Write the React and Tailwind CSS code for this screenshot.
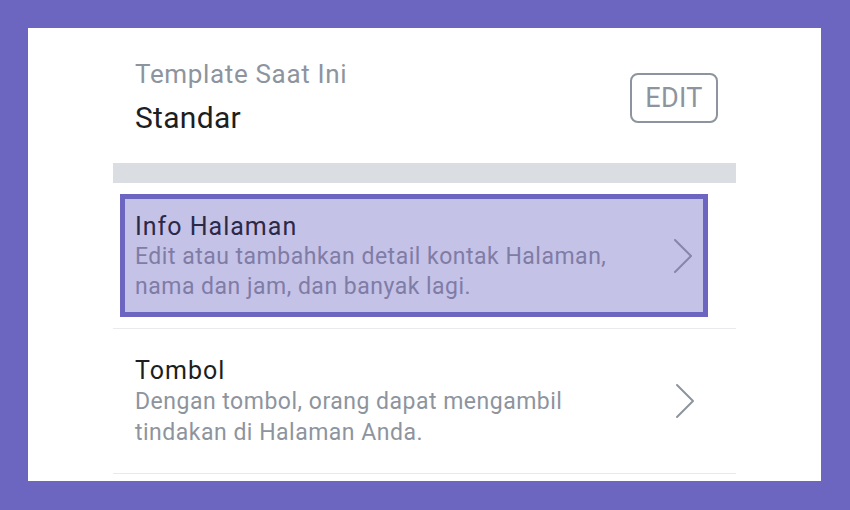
function Chevron({ color }) {
  return (
    <svg width="20" height="36" viewBox="0 0 20 36" fill="none" className="shrink-0">
      <path d="M2 2L18 18L2 34" stroke={color} strokeWidth="2" strokeLinecap="round" strokeLinejoin="round" />
    </svg>
  )
}

function App() {
  return (
    <div
      className="w-[850px] h-[510px] bg-[#6d66c1] pt-[28px] pl-[28px] pr-[29px] pb-[29px]"
      style={{ fontFamily: 'Roboto, "Noto Sans", sans-serif' }}
    >
      <div className="w-full h-full bg-white overflow-hidden">
        <div className="ml-[85px] w-[623px]">
          {/* Current template */}
          <div className="h-[135px] flex items-start justify-between pl-[22px] pr-[18px]">
            <div className="pt-[31px]">
              <div className="text-[26px] leading-[30px] tracking-[0.65px] text-[#8d949e]">Template Saat Ini</div>
              <div className="text-[30px] leading-[36px] mt-[11px] tracking-[0.3px] text-[#1c1e21]">Standar</div>
            </div>
            <button className="mt-[45px] w-[88px] h-[50px] rounded-[8px] border-2 border-[#8d949e] text-[27px] tracking-[0.3px] text-[#8d949e] flex items-center justify-center">
              EDIT
            </button>
          </div>

          <div className="h-[20px] bg-[#dadde1]" />

          {/* Highlighted row */}
          <div className="pt-[11px] pb-[11px] border-b border-[#e9eaee]">
            <div className="ml-[7px] w-[588px] h-[123px] border-[5px] border-[#6d66c1] bg-[#c5c2e7] flex items-center pl-[10px] pr-[10px]">
              <div className="flex-1 pt-[2px]">
                <div className="text-[25px] leading-[30px] tracking-[1px] text-[#2b2947]">Info Halaman</div>
                <div className="text-[23px] leading-[30px] tracking-[0.5px] text-[#7f7ca6]">
                  Edit atau tambahkan detail kontak Halaman,
                  <br />
                  nama dan jam, dan banyak lagi.
                </div>
              </div>
              <Chevron color="#8886a8" />
            </div>
          </div>

          {/* Buttons row */}
          <div className="h-[145px] border-b border-[#e9eaee] flex items-center pl-[22px] pr-[41px]">
            <div className="flex-1 pt-[1px]">
              <div className="text-[25px] leading-[30px] tracking-[1px] text-[#1c1e21]">Tombol</div>
              <div className="text-[23px] leading-[31px] tracking-[0.5px] text-[#8d949e]">
                Dengan tombol, orang dapat mengambil
                <br />
                tindakan di Halaman Anda.
              </div>
            </div>
            <Chevron color="#8d949e" />
          </div>
        </div>
      </div>
    </div>
  )
}

export default App
